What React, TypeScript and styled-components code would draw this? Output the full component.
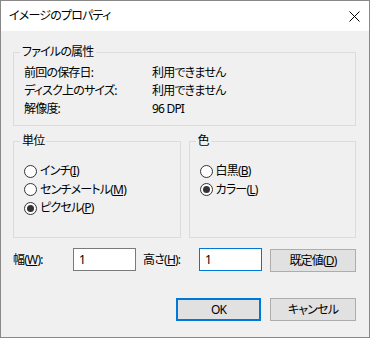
import React from "react";
import styled, { createGlobalStyle } from "styled-components";

const GlobalStyle = createGlobalStyle`
  html, body { margin: 0; padding: 0; background: #fff; }
  body {
    font-family: "Noto Sans", "Noto Sans CJK JP", sans-serif;
    font-size: 12px;
    color: #000;
    font-feature-settings: "palt";
    letter-spacing: -0.8px;
  }
  * { box-sizing: border-box; }
`;

const Window = styled.div`
  width: 370px;
  height: 338px;
  border: 1px solid #888;
  background: #f0f0f0;
  display: flex;
  flex-direction: column;
`;

const TitleBar = styled.div`
  height: 30px;
  flex: none;
  background: #fff;
  display: flex;
  align-items: center;
  justify-content: space-between;
  padding: 0 9px 0 8px;
  line-height: 14px;
`;

const CloseButton = styled.svg`
  display: block;
`;

const Body = styled.div`
  flex: 1;
  display: flex;
  flex-direction: column;
  padding: 0 13px 0 12px;
  line-height: 14px;
`;

const GroupBox = styled.div<{ $top: number; $height?: number }>`
  position: relative;
  flex: none;
  margin-top: ${(p) => p.$top}px;
  border: 1px solid #dcdcdc;
  ${(p) => (p.$height ? `height: ${p.$height}px;` : "")}
`;

const HalfGroup = styled(GroupBox)`
  flex: 1 1 0;
`;

const Legend = styled.span`
  position: absolute;
  top: -8px;
  left: 6px;
  padding: 0 2px;
  background: #f0f0f0;
  line-height: 14px;
`;

const InfoGrid = styled.div`
  display: grid;
  grid-template-columns: 128px 1fr;
  grid-auto-rows: 18px;
  align-items: center;
  padding: 11px 10px 7px;
`;

const GroupRow = styled.div`
  display: flex;
  gap: 8px;
  margin-top: 15px;
`;

const RadioList = styled.div`
  display: flex;
  flex-direction: column;
  padding: 20px 10px 0;
`;

const RadioRow = styled.label`
  display: flex;
  align-items: center;
  height: 18.5px;
  gap: 3px;
`;

const RadioCircle = styled.span<{ $checked?: boolean }>`
  width: 13px;
  height: 13px;
  flex: none;
  border-radius: 50%;
  border: 1px solid #333;
  background: #fff;
  display: flex;
  align-items: center;
  justify-content: center;
  &::after {
    content: "";
    display: ${(p) => (p.$checked ? "block" : "none")};
    width: 7px;
    height: 7px;
    border-radius: 50%;
    background: #333;
  }
`;

const SizeRow = styled.div`
  display: flex;
  align-items: flex-start;
  margin-top: 10px;
`;

const FieldLabel = styled.span<{ $width: number }>`
  width: ${(p) => p.$width}px;
  height: 23px;
  display: flex;
  align-items: center;
  flex: none;
`;

const TextBox = styled.input<{ $focused?: boolean }>`
  width: 63px;
  height: 23px;
  flex: none;
  border: 1px solid ${(p) => (p.$focused ? "#0078d7" : "#7a7a7a")};
  background: #fff;
  padding: 0 5px;
  margin: 0 ${(p) => (p.$focused ? 8 : 7)}px 0 0;
  font: inherit;
  letter-spacing: inherit;
  color: #000;
  outline: none;
`;

const Button = styled.button<{ $default?: boolean; $width?: number }>`
  width: ${(p) => p.$width ?? 86}px;
  height: 23px;
  flex: none;
  margin: 0;
  padding: 0;
  font: inherit;
  letter-spacing: inherit;
  line-height: 14px;
  color: #000;
  background: #e1e1e1;
  border: ${(p) => (p.$default ? "2px solid #0078d7" : "1px solid #adadad")};
`;

const SideButton = styled(Button)`
  margin-top: 1px;
`;

const Footer = styled.div`
  display: flex;
  justify-content: flex-end;
  gap: 9px;
  margin-top: 26px;
`;

function Radio({ label, keyChar, checked }: { label: string; keyChar: string; checked?: boolean }) {
  return (
    <RadioRow>
      <RadioCircle $checked={checked} />
      <span>
        {label}(<u>{keyChar}</u>)
      </span>
    </RadioRow>
  );
}

export default function App() {
  return (
    <>
      <GlobalStyle />
      <Window>
        <TitleBar>
          <span>イメージのプロパティ</span>
          <CloseButton width="11" height="11" viewBox="0 0 11 11">
            <path d="M0.5 0.5 L10.5 10.5 M10.5 0.5 L0.5 10.5" stroke="#000" strokeWidth="1" />
          </CloseButton>
        </TitleBar>
        <Body>
          <GroupBox $top={21}>
            <Legend>ファイルの属性</Legend>
            <InfoGrid>
              <span>前回の保存日:</span>
              <span>利用できません</span>
              <span>ディスク上のサイズ:</span>
              <span>利用できません</span>
              <span>解像度:</span>
              <span>96 DPI</span>
            </InfoGrid>
          </GroupBox>
          <GroupRow>
            <HalfGroup $top={0} $height={97}>
              <Legend>単位</Legend>
              <RadioList>
                <Radio label="インチ" keyChar="I" />
                <Radio label="センチメートル" keyChar="M" />
                <Radio label="ピクセル" keyChar="P" checked />
              </RadioList>
            </HalfGroup>
            <HalfGroup $top={0} $height={97}>
              <Legend>色</Legend>
              <RadioList>
                <Radio label="白黒" keyChar="B" />
                <Radio label="カラー" keyChar="L" checked />
              </RadioList>
            </HalfGroup>
          </GroupRow>
          <SizeRow>
            <FieldLabel $width={60}>
              <span>
                幅(<u>W</u>):
              </span>
            </FieldLabel>
            <TextBox defaultValue="1" />
            <FieldLabel $width={56}>
              <span>
                高さ(<u>H</u>):
              </span>
            </FieldLabel>
            <TextBox defaultValue="1" $focused />
            <SideButton>
              既定値(<u>D</u>)
            </SideButton>
          </SizeRow>
          <Footer>
            <Button $default $width={85}>OK</Button>
            <Button>キャンセル</Button>
          </Footer>
        </Body>
      </Window>
    </>
  );
}
